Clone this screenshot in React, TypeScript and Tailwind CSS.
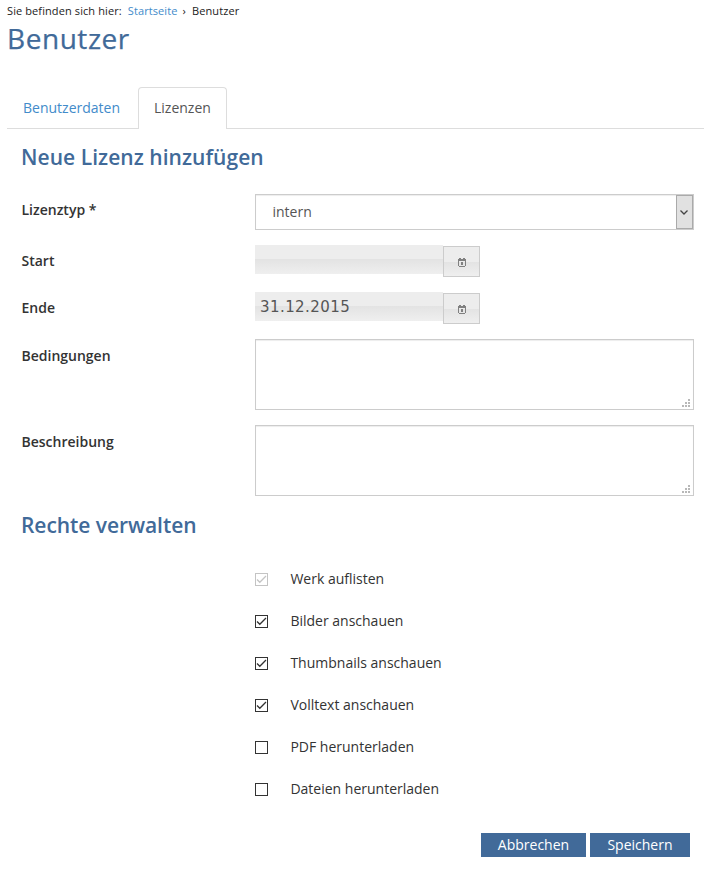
import type { ReactNode } from 'react';

function Row({ label, className, labelClass, children }: { label: string; className: string; labelClass: string; children: ReactNode }) {
  return (
    <div className={`flex items-start ${className}`}>
      <label className={`w-[234px] shrink-0 pl-[0.5px] text-[14px] leading-5 font-semibold whitespace-nowrap text-[#333] ${labelClass}`}>{label}</label>
      {children}
    </div>
  );
}

function CalendarIcon() {
  return (
    <svg width="8" height="9" viewBox="0 0 8 9" shapeRendering="crispEdges" fill="#808080">
      <path d="M1 0h2v1h-2zM5 0h2v1h-2zM0 1h8v2h-8zM0 3h1v5h-1zM7 3h1v5h-1zM1 8h6v1h-6zM3 4h2v3h-2z" />
    </svg>
  );
}

function DateField({ value }: { value: string }) {
  return (
    <div className="flex items-start">
      <div className="h-[29px] w-[188px] bg-[linear-gradient(#ededed_0%,#ededed_48%,#e3e3e3_49%,#efefef_100%)] pl-[5px] font-['DejaVu_Sans','Open_Sans',sans-serif] text-[15px] leading-[30px] tracking-[0.43px] text-[#555]">
        {value}
      </div>
      <button className="mt-px flex h-[31px] w-[37px] items-center justify-center border border-[#ccc] bg-[linear-gradient(#ededed_0%,#ededed_50%,#e3e3e3_51%,#efefef_100%)] pt-[2px]">
        <CalendarIcon />
      </button>
    </div>
  );
}

function TextArea() {
  return (
    <div className="flex h-[71px] w-[439px] items-end justify-end border border-[#ccc] bg-white pr-[3px] pb-[2px] shadow-[inset_0_1px_1px_rgba(0,0,0,0.075)]">
      <svg width="8" height="8" viewBox="0 0 8 8" shapeRendering="crispEdges" fill="#b8b8b8">
        <path d="M6 0h2v2h-2zM3 3h2v2h-2zM6 3h2v2h-2zM0 6h2v2h-2zM3 6h2v2h-2zM6 6h2v2h-2z" />
      </svg>
    </div>
  );
}

function Check({ label, checked, disabled }: { label: string; checked?: boolean; disabled?: boolean }) {
  return (
    <div className="flex h-[42px] items-center">
      <svg className={disabled ? 'text-[#c4c4c4]' : 'text-[#333]'} width="13" height="13" viewBox="0 0 13 13" fill="none" stroke="currentColor">
        <rect x="0.5" y="0.5" width="12" height="12" />
        {checked && <path d="M2 6.5L4.8 9.3L11 3" strokeWidth="1.3" />}
      </svg>
      <span className="ml-[22.4px] text-[14px] leading-5 whitespace-nowrap">{label}</span>
    </div>
  );
}

export default function App() {
  return (
    <main className="h-[875px] w-[704px] overflow-hidden bg-white pl-[7px] font-['Open_Sans',sans-serif] text-[14px] text-[#333]">
      <nav className="flex h-[22px] items-center text-[11px] leading-[22px] tracking-[0.1px] whitespace-nowrap text-[#222]">
        <span>Sie befinden sich hier:</span>
        <a className="ml-[6px] text-[#428bca]">Startseite</a>
        <span className="mr-[6px] ml-[5px]">›</span>
        <span>Benutzer</span>
      </nav>
      <h1 className="h-[65px] text-[28px] leading-[33px] font-medium tracking-[0.55px] text-[#416a99] [-webkit-text-stroke:0.25px]">Benutzer</h1>
      <div className="flex h-[42px] items-end border-b border-[#ddd]">
        <a className="h-[41px] w-[131px] pl-[16px] text-[14px] leading-[41px] text-[#428bca]">Benutzerdaten</a>
        <a className="-mb-px h-[42px] w-[89px] rounded-t-[4px] border border-b-0 border-[#ddd] bg-white pl-[15px] leading-[40px] text-[#555]">Lizenzen</a>
      </div>
      <form className="pl-[14px]">
        <h2 className="mt-[13px] h-[52px] text-[21px] leading-[30px] font-semibold tracking-[0.05px] text-[#416a99]">Neue Lizenz hinzufügen</h2>
        <Row label="Lizenztyp *" className="h-[51px]" labelClass="mt-[6px]">
          <div className="flex h-[36px] w-[439px] border border-[#ccc] shadow-[inset_0_1px_1px_rgba(0,0,0,0.075)]">
            <span className="flex-1 pl-[16.5px] leading-[34px] text-[#555]">intern</span>
            <span className="flex h-[34px] w-[17px] items-center justify-center border border-[#aaa] bg-[#e1e1e1] pr-px">
              <svg width="8" height="5" viewBox="0 0 8 5" fill="none" stroke="#444" strokeWidth="1.3"><path d="M0.5 0.5L4 4L7.5 0.5" /></svg>
            </span>
          </div>
        </Row>
        <Row label="Start" className="h-[47px]" labelClass="mt-[6px]"><DateField value="" /></Row>
        <Row label="Ende" className="h-[47px]" labelClass="mt-[6px]"><DateField value="31.12.2015" /></Row>
        <Row label="Bedingungen" className="h-[86px]" labelClass="mt-[7px]"><TextArea /></Row>
        <Row label="Beschreibung" className="h-[86px]" labelClass="mt-[7px]"><TextArea /></Row>
        <h2 className="-mt-px h-[48px] text-[21px] leading-[30px] font-semibold tracking-[-0.06px] text-[#416a99]">Rechte verwalten</h2>
        <div className="pl-[234px]">
          <Check label="Werk auflisten" checked disabled />
          <Check label="Bilder anschauen" checked />
          <Check label="Thumbnails anschauen" checked />
          <Check label="Volltext anschauen" checked />
          <Check label="PDF herunterladen" />
          <Check label="Dateien herunterladen" />
        </div>
        <div className="mt-[23px] flex justify-end gap-1 pr-[14px] text-white">
          <button type="button" className="h-[24px] w-[105px] bg-[#416a99] leading-6">Abbrechen</button>
          <button type="button" className="h-[24px] w-[100px] bg-[#416a99] leading-6">Speichern</button>
        </div>
      </form>
    </main>
  );
}
